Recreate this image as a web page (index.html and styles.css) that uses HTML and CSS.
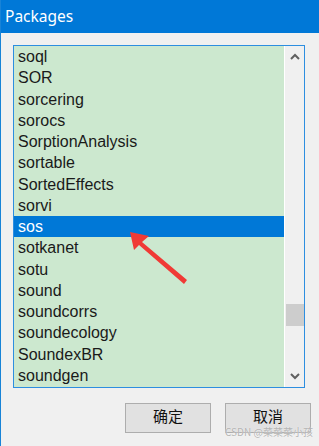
FILE: index.html
```html
<!DOCTYPE html>
<html lang="en">
<head>
    <meta charset="UTF-8">
    <title>Packages</title>
    <link rel="stylesheet" href="styles.css">
</head>
<body>

    <div class="dialog">
        <div class="titlebar">Packages</div>

        <div class="content">
            <div class="listbox">
                <ul class="items">
                    <li>soql</li>
                    <li>SOR</li>
                    <li>sorcering</li>
                    <li>sorocs</li>
                    <li>SorptionAnalysis</li>
                    <li>sortable</li>
                    <li>SortedEffects</li>
                    <li>sorvi</li>
                    <li class="selected">sos</li>
                    <li>sotkanet</li>
                    <li>sotu</li>
                    <li>sound</li>
                    <li>soundcorrs</li>
                    <li>soundecology</li>
                    <li>SoundexBR</li>
                    <li>soundgen</li>
                </ul>
                <div class="scrollbar">
                    <svg class="chev" width="10" height="7" viewBox="0 0 10 7"><path d="M1 6 L5 2 L9 6" fill="none" stroke="#606060" stroke-width="2"/></svg>
                    <div class="track"><div class="thumb"></div></div>
                    <svg class="chev" width="10" height="7" viewBox="0 0 10 7"><path d="M1 1 L5 5 L9 1" fill="none" stroke="#606060" stroke-width="2"/></svg>
                </div>
            </div>

            <div class="buttons">
                <button class="btn">确定</button>
                <button class="btn">取消</button>
            </div>
        </div>

        <!-- annotation arrow drawn over the list -->
        <svg class="arrow" width="319" height="446" viewBox="0 0 319 446">
            <polygon points="130,232 149,236 142,242 187,280 184,284 139,245 134,250" fill="#f03a35"/>
        </svg>
        <div class="watermark">CSDN @菜菜菜小孩</div>
    </div>

</body>
</html>
```

FILE: styles.css
```css
body {
    margin: 0;
    padding: 0;
    background-color: #f0f0f0;
}
.dialog {
    position: relative;
    width: 319px;
    height: 446px;
    background-color: #f0f0f0;
    border-left: 1px solid #1883d7;
    box-sizing: border-box;
    overflow: hidden;
}
.titlebar {
    height: 33px;
    background-color: #0078d7;
    color: white;
    font-family: "Noto Sans", sans-serif;
    font-size: 15.5px;
    line-height: 33px;
    padding-left: 5px;
    margin-left: -1px;
}
.content {
    padding: 12px 0 0 12px;
}
.listbox {
    display: flex;
    width: 292px;
    height: 343px;
    box-sizing: border-box;
    border: 1px solid #2d8ee0;
    background-color: #cce8cf;
}
.items {
    flex: 1;
    list-style: none;
    margin: 0;
    padding: 0;
    font-family: "Liberation Sans", sans-serif;
    font-size: 16px;
    color: #1a1a1a;
}
.items li {
    height: 21.25px;
    line-height: 21px;
    padding-left: 4px;
}
.items li.selected {
    background-color: #0078d7;
    color: white;
}
.scrollbar {
    width: 19px;
    display: flex;
    flex-direction: column;
    align-items: center;
    background-color: #f0f0f0;
    border-left: 1px solid #ffffff;
}
.chev {
    margin: 7px 0;
}
.track {
    flex: 1;
    width: 100%;
    position: relative;
}
.thumb {
    position: absolute;
    left: 1px;
    right: 0;
    top: 237px;
    height: 22px;
    background-color: #cdcdcd;
}
.buttons {
    display: flex;
    justify-content: flex-end;
    gap: 14px;
    margin-top: 15px;
    padding-right: 8px;
}
.btn {
    width: 86px;
    height: 30px;
    background-color: #e1e1e1;
    border: 1px solid #adadad;
    font-family: "Noto Sans CJK SC", sans-serif;
    font-size: 15px;
    line-height: 18px;
    color: #111;
    padding: 0 0 4px;
}
.arrow {
    position: absolute;
    left: -1px;
    top: 0;
    pointer-events: none;
}
.watermark {
    position: absolute;
    left: 224px;
    top: 427px;
    font-family: "Noto Sans CJK SC", sans-serif;
    font-size: 10px;
    line-height: 10px;
    color: rgba(160, 160, 160, 0.8);
    text-shadow: 0 0 1px #fff;
}
```
